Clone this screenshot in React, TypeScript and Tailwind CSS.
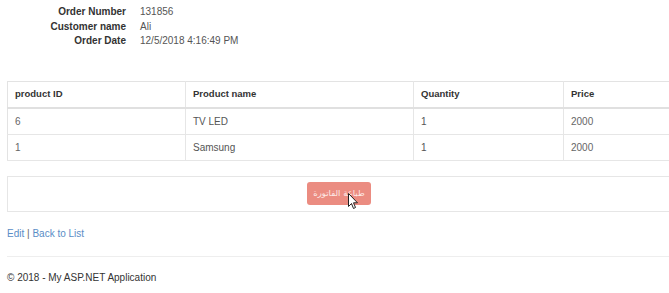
import React from "react";

const details = [
  { label: "Order Number", value: "131856" },
  { label: "Customer name", value: "Ali" },
  { label: "Order Date", value: "12/5/2018 4:16:49 PM" },
];

const items = [
  { id: "6", name: "TV LED", qty: "1", price: "2000" },
  { id: "1", name: "Samsung", qty: "1", price: "2000" },
];

const Cursor = () => (
  <svg
    className="absolute left-[348px] top-[10px] w-[11px] h-[17px]"
    viewBox="0 0 11 17"
  >
    <path
      d="M0.5 0.5 L0.5 13.5 L3.5 10.5 L5.5 15.5 L7.5 14.5 L5.5 9.8 L9.5 9.8 Z"
      fill="#fff"
      stroke="#222"
      strokeWidth="1"
      strokeLinejoin="round"
    />
  </svg>
);

const App = () => {
  return (
    <div className="w-full h-[293px] overflow-hidden bg-white font-['Liberation_Sans',Arial,sans-serif] text-[10px] text-[#555]">
      <div className="w-[671px] pl-[7px]">
        <dl className="pt-[5px] grid grid-cols-[119px_1fr] gap-x-[14px] leading-[14.5px]">
          {details.map((d) => (
            <React.Fragment key={d.label}>
              <dt className="text-right font-bold text-[#333]">{d.label}</dt>
              <dd>
                <span className="text-[#555]">{d.value}</span>
              </dd>
            </React.Fragment>
          ))}
        </dl>

        <table className="mt-[32px] w-full border-collapse border border-[#e3e3e3] table-fixed">
          <colgroup>
            <col className="w-[178px]" />
            <col className="w-[228px]" />
            <col className="w-[150px]" />
            <col />
          </colgroup>
          <thead>
            <tr className="h-[27px] border-b-2 border-[#e0e0e0]">
              <th className="text-left font-bold text-[9.5px] text-[#333] px-[7px] border-r border-[#e6e6e6]">
                product ID
              </th>
              <th className="text-left font-bold text-[9.5px] text-[#333] px-[7px] border-r border-[#e6e6e6]">
                Product name
              </th>
              <th className="text-left font-bold text-[9.5px] text-[#333] px-[7px] border-r border-[#e6e6e6]">
                Quantity
              </th>
              <th className="text-left font-bold text-[9.5px] text-[#333] px-[7px]">
                Price
              </th>
            </tr>
          </thead>
          <tbody>
            {items.map((it, i) => (
              <tr key={i} className="h-[26px] border-b border-[#e6e6e6]">
                <td className="px-[7px] border-r border-[#e6e6e6] text-[#666]">{it.id}</td>
                <td className="px-[7px] border-r border-[#e6e6e6]">{it.name}</td>
                <td className="px-[7px] border-r border-[#e6e6e6]">{it.qty}</td>
                <td className="px-[7px] text-[#666]">{it.price}</td>
              </tr>
            ))}
          </tbody>
        </table>

        <div className="mt-[15px] h-[36px] border border-[#e6e6e6] flex items-center justify-center">
          <button
            dir="rtl"
            className="w-[64px] h-[23px] rounded-[3px] bg-[#eb8c81] text-[#fde9e6] text-[8.5px] font-['DejaVu_Sans',sans-serif] flex items-center justify-center"
          >
            طباعة الفاتورة
          </button>
        </div>

        <div className="mt-[16px] leading-[12px] text-[#5a8dc6]">
          <a>Edit</a> <span className="text-[#666]">|</span> <a>Back to List</a>
        </div>

        <hr className="mt-[16px] border-t border-[#eeeeee]" />

        <footer className="mt-[15px] text-[#333] leading-[12px]">
          © 2018 - My ASP.NET Application
        </footer>
      </div>
      <div className="absolute top-[183px] left-0 w-0 h-0">
        <Cursor />
      </div>
    </div>
  );
};

export default App;
